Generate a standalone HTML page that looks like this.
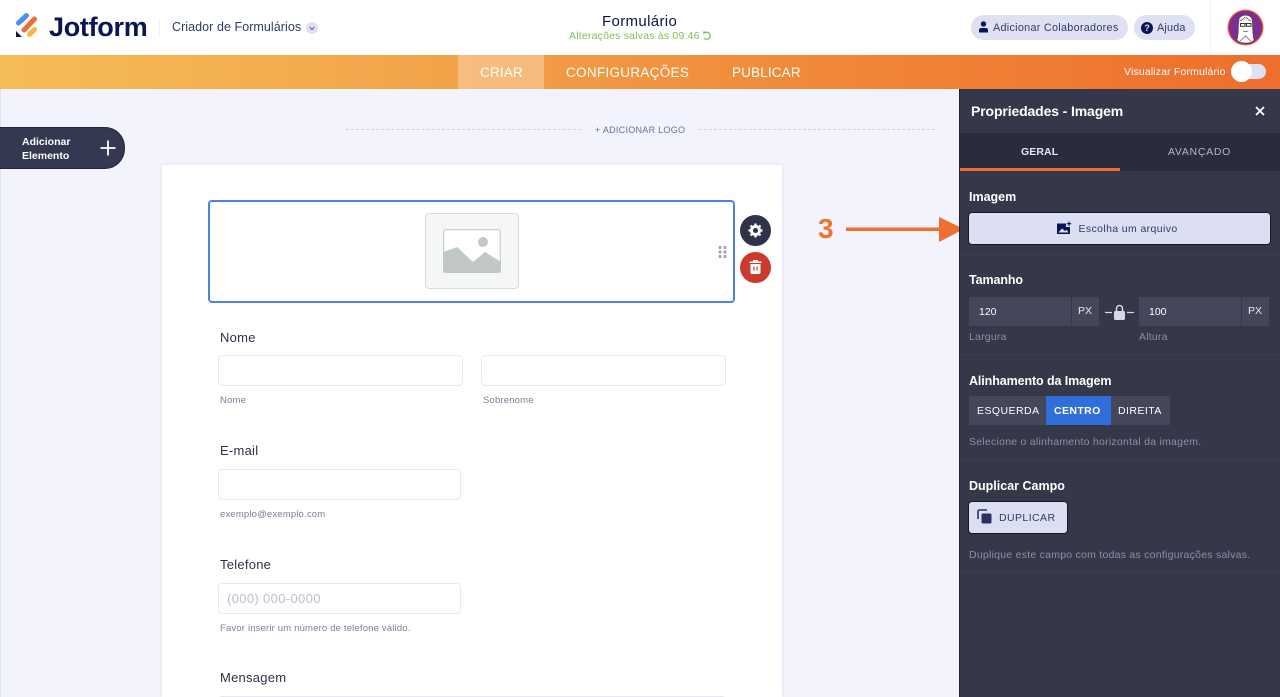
<!DOCTYPE html>
<html lang="pt"><head><meta charset="utf-8"><title>Jotform</title>
<style>
html,body{margin:0;padding:0;width:1280px;height:697px;overflow:hidden;background:#f3f3fe;font-family:"Liberation Sans",sans-serif}
#r{position:relative;width:1280px;height:697px;overflow:hidden}
.a{position:absolute}
.t{position:absolute;white-space:nowrap;line-height:1}
.f{position:absolute;background:#fff;border:1px solid #e8e9f0;border-radius:4px;box-sizing:border-box}
.lab{font-size:13px;color:#2c3345;letter-spacing:.25px}
.sub{font-size:9.5px;color:#7a7f98;letter-spacing:.17px}
.h{font-size:12.5px;font-weight:bold;color:#fff}
.g{font-size:10.5px;color:#8d8fa8;letter-spacing:.2px}
</style></head><body><div id="r">
<!-- header -->
<div class="a" style="left:0;top:0;width:1280px;height:55px;background:#fff"></div>
<svg class="a" style="left:15px;top:13px" width="24" height="25" viewBox="0 0 24 25">
<path d="M3.500 10 L11.500 2.500" stroke="#4c8df6" stroke-width="5" stroke-linecap="round"/>
<path d="M9 17 L19.500 6" stroke="#f26b36" stroke-width="5" stroke-linecap="round"/>
<path d="M14.500 21.500 L19.500 16.500" stroke="#f9b44b" stroke-width="5" stroke-linecap="round"/>
<path d="M1 18 L1 24 L7 24 Z" fill="#0a1551"/></svg>
<div class="t" style="left:49px;top:14px;font-size:27px;font-weight:bold;color:#0a1551;letter-spacing:-.3px">Jotform</div>
<div class="a" style="left:159px;top:19px;width:1px;height:17px;background:#eef0f6"></div>
<div class="t" style="left:172px;top:21px;font-size:12.500px;color:#2f3a6b;letter-spacing:.06px">Criador de Formulários</div>
<div class="a" style="left:306px;top:22px;width:12px;height:12px;border-radius:50%;background:#dfe1f2"></div>
<svg class="a" style="left:306px;top:22px" width="12" height="12"><path d="M3.500 5 L6 7.500 L8.500 5" fill="none" stroke="#5b6390" stroke-width="1"/></svg>
<div class="t" style="left:602px;top:14px;font-size:15px;color:#0a1551;letter-spacing:.35px">Formulário</div>
<div class="t" style="left:569px;top:31px;font-size:10.500px;color:#82bd54;letter-spacing:.2px">Alterações salvas às 09:46</div>
<svg class="a" style="left:702px;top:31px" width="10" height="10" viewBox="0 0 10 10"><path d="M2.500 2 A3.500 3.500 0 1 1 2 7" fill="none" stroke="#82bd54" stroke-width="1.300"/><path d="M1 .5 L4.500 .5 L1.500 3.500Z" fill="#82bd54"/></svg>
<div class="a" style="left:971px;top:15px;width:157px;height:25px;border-radius:13px;background:#dfe1f2"></div>
<svg class="a" style="left:978px;top:21px" width="11" height="12" viewBox="0 0 11 12"><circle cx="5.500" cy="3" r="2.700" fill="#0a1551"/><path d="M1 11.500 V9 Q1 7 3.500 7 H7.500 Q10 7 10 9 V11.500Z" fill="#0a1551"/></svg>
<div class="t" style="left:993px;top:22.500px;font-size:10.800px;color:#2f3a6b;letter-spacing:.29px">Adicionar Colaboradores</div>
<div class="a" style="left:1134px;top:15px;width:61px;height:25px;border-radius:13px;background:#dfe1f2"></div>
<div class="a" style="left:1141px;top:22px;width:12px;height:12px;border-radius:50%;background:#0a1551;color:#dfe1f2;font-size:9px;font-weight:bold;line-height:12px;text-align:center">?</div>
<div class="t" style="left:1157px;top:22.500px;font-size:10.800px;color:#2f3a6b;letter-spacing:.2px">Ajuda</div>
<div class="a" style="left:1210px;top:0;width:1px;height:55px;background:#f1f2f7"></div>
<svg class="a" style="left:1227px;top:9px" width="37" height="37" viewBox="0 0 37 37">
<circle cx="18.500" cy="18.500" r="18" fill="#f0602f"/><circle cx="18.500" cy="18.500" r="16.800" fill="#7d2e91"/>
<path d="M10 31 C12 24 11 14 12 10 C13 5 24 5 25 10 C26 14 25 24 27 31 C24 35 13 35 10 31Z" fill="#fff" stroke="#444" stroke-width=".6"/>
<path d="M13 14.500 H24" stroke="#333" stroke-width=".8"/>
<rect x="13.500" y="14.500" width="4.500" height="2.800" fill="none" stroke="#333" stroke-width="1"/><rect x="19.500" y="14.500" width="4.500" height="2.800" fill="none" stroke="#333" stroke-width="1"/>
<path d="M16 22 Q18.500 23.500 21 22 M13 32 L18.500 27 L24 32 M12.500 12 Q16 11 18 8 M24 12 Q21 11 19 8" fill="none" stroke="#555" stroke-width=".7"/></svg>
<!-- orange bar -->
<div class="a" style="left:0;top:55px;width:1280px;height:34px;background:linear-gradient(90deg,#f5bc57 0%,#f2a74b 30%,#f08737 65%,#ee6e2d 100%)"></div>
<div class="a" style="left:458px;top:55px;width:86px;height:34px;background:rgba(255,255,255,.3)"></div>
<div class="t" style="left:480px;top:65.500px;font-size:13.500px;color:#fff;letter-spacing:.2px">CRIAR</div>
<div class="t" style="left:566px;top:65.500px;font-size:13.500px;color:#fff;letter-spacing:.3px">CONFIGURAÇÕES</div>
<div class="t" style="left:732px;top:65.500px;font-size:13.500px;color:#fff;letter-spacing:.15px">PUBLICAR</div>
<div class="t" style="left:1124px;top:67px;font-size:10.500px;color:#fff;letter-spacing:.15px">Visualizar Formulário</div>
<div class="a" style="left:1234px;top:64px;width:32px;height:15px;border-radius:8px;background:#dfe1f2"></div>
<div class="a" style="left:1231px;top:61px;width:21px;height:21px;border-radius:50%;background:#fff"></div>
<!-- canvas -->
<div class="a" style="left:0;top:89px;width:1px;height:608px;background:#e3e4f2"></div>
<div class="a" style="left:346px;top:129px;width:235px;border-top:1px dashed #cfd1e3"></div>
<div class="a" style="left:699px;top:129px;width:236px;border-top:1px dashed #cfd1e3"></div>
<div class="t" style="left:595px;top:126px;font-size:9px;color:#6b6f95;letter-spacing:.28px">+ ADICIONAR LOGO</div>
<div class="a" style="left:0;top:127px;width:125px;height:42px;box-sizing:border-box;background:#343851;border:1px solid #24273a;border-left:0;border-radius:0 20px 20px 0"></div>
<div class="t" style="left:22px;top:135px;font-size:10.500px;font-weight:bold;color:#fff;line-height:14px">Adicionar<br>Elemento</div>
<svg class="a" style="left:100px;top:140px" width="16" height="16"><path d="M8 0.500V15.500M0.500 8H15.500" stroke="#fff" stroke-width="1.800"/></svg>
<!-- form card -->
<div class="a" style="left:162px;top:165px;width:620px;height:532px;background:#fff;box-shadow:0 0 4px rgba(80,80,140,.12)"></div>
<div class="a" style="left:208px;top:200px;width:527px;height:103px;box-sizing:border-box;border:2px solid #4f81e2;border-radius:4px"></div>
<div class="a" style="left:425px;top:213px;width:94px;height:76px;box-sizing:border-box;background:#f5f6f8;border:1px solid #d8dbdd;border-radius:4px"></div>
<svg class="a" style="left:443px;top:229px" width="58" height="44" viewBox="0 0 58 44">
<rect x=".7" y=".7" width="56.600" height="42.600" rx="2" fill="#fff" stroke="#cdd2d2" stroke-width="1.400"/>
<circle cx="40" cy="13" r="5" fill="#c1c7c7"/>
<path d="M0 23 L14 18 L30 33 L42 23 L58 33 V42 Q58 44 56 44 H2 Q0 44 0 42Z" fill="#c1c7c7"/></svg>
<svg class="a" style="left:718px;top:245px" width="9" height="14"><g fill="#a0a5bf"><circle cx="2" cy="2.500" r="1.600"/><circle cx="7" cy="2.500" r="1.600"/><circle cx="2" cy="7" r="1.600"/><circle cx="7" cy="7" r="1.600"/><circle cx="2" cy="11.500" r="1.600"/><circle cx="7" cy="11.500" r="1.600"/></g></svg>
<div class="a" style="left:740px;top:215px;width:31px;height:31px;border-radius:50%;background:#2f3349"></div>
<svg class="a" style="left:747px;top:222px" width="17" height="17" viewBox="0 0 17 17"><circle cx="8.500" cy="8.500" r="4" fill="none" stroke="#fff" stroke-width="3"/><path d="M8.500 1.500V4M8.500 13V15.500M1.500 8.500H4M13 8.500H15.500M3.500 3.500L5.300 5.300M11.700 11.700L13.500 13.500M13.500 3.500L11.700 5.300M5.300 11.700L3.500 13.500" stroke="#fff" stroke-width="2.200"/></svg>
<div class="a" style="left:740px;top:252px;width:31px;height:31px;border-radius:50%;background:#cc3a2e"></div>
<svg class="a" style="left:749px;top:259px" width="13" height="16" viewBox="0 0 13 16"><path d="M0.500 2.500H12.500V4H0.500Z M4 2.500V1H9V2.500Z M1.500 5H11.500V13.500Q11.500 15 10 15H3Q1.500 15 1.500 13.500Z" fill="#fff"/><path d="M5 7.500V11.500M8 7.500V11.500" stroke="#cc3a2e" stroke-width="1.200"/></svg>
<div class="t lab" style="left:220px;top:331px">Nome</div>
<div class="f" style="left:218px;top:355px;width:245px;height:31px"></div>
<div class="f" style="left:481px;top:355px;width:245px;height:31px"></div>
<div class="t sub" style="left:220px;top:395.500px">Nome</div>
<div class="t sub" style="left:483px;top:395.500px">Sobrenome</div>
<div class="t lab" style="left:220px;top:444px">E-mail</div>
<div class="f" style="left:218px;top:469px;width:243px;height:31px"></div>
<div class="t sub" style="left:220px;top:510px">exemplo@exemplo.com</div>
<div class="t lab" style="left:220px;top:558px">Telefone</div>
<div class="f" style="left:218px;top:583px;width:243px;height:31px"></div>
<div class="t" style="left:227px;top:592px;font-size:13px;color:#b9bdd0;letter-spacing:.35px">(000) 000-0000</div>
<div class="t sub" style="left:220px;top:624px">Favor inserir um número de telefone válido.</div>
<div class="t lab" style="left:220px;top:671px">Mensagem</div>
<div class="f" style="left:218px;top:696px;width:508px;height:31px"></div>
<!-- arrow -->
<div class="t" style="left:818px;top:215px;font-size:28px;font-weight:bold;color:#ee7430;">3</div>
<svg class="a" style="left:845px;top:216px" width="120" height="26"><path d="M1 11.500H94V1L119 13L94 26V15H1Z" fill="#ee7030"/></svg>
<!-- panel -->
<div class="a" style="left:959px;top:89px;width:321px;height:608px;background:#343849;border-left:1px solid #1f2130;box-sizing:border-box"></div>
<div class="t" style="left:971px;top:104px;font-size:14px;font-weight:bold;color:#fff;letter-spacing:-.13px">Propriedades - Imagem</div>
<svg class="a" style="left:1255px;top:106px" width="10" height="10"><path d="M1 1L9 9M9 1L1 9" stroke="#fff" stroke-width="1.800"/></svg>
<div class="a" style="left:960px;top:133px;width:320px;height:38px;background:#292c3c"></div>
<div class="a" style="left:960px;top:168px;width:160px;height:3px;background:#ee6d2c"></div>
<div class="t" style="left:1021px;top:147px;font-size:10.500px;font-weight:bold;color:#e6e6ee;letter-spacing:.1px">GERAL</div>
<div class="t" style="left:1168px;top:147px;font-size:10.500px;color:#b4b6c6;letter-spacing:.7px">AVANÇADO</div>
<div class="t h" style="left:969px;top:190.500px">Imagem</div>
<div class="a" style="left:968px;top:212px;width:303px;height:33px;box-sizing:border-box;background:#dcdff2;border:1px solid #15172a;border-radius:4px"></div>
<svg class="a" style="left:1056px;top:221px" width="16" height="14" viewBox="0 0 16 14"><path d="M1 2.500H10V6H14V13H1Z" fill="#0a1551"/><path d="M2.500 11.500L6 7.500L9 10L10.500 8.800L12.500 11.500Z" fill="#dcdff2"/><path d="M13 .5V5M10.800 2.700H15.200" stroke="#0a1551" stroke-width="1.100"/></svg>
<div class="t" style="left:1078.500px;top:224px;font-size:10.500px;color:#2f3a6b;letter-spacing:.38px">Escolha um arquivo</div>
<div class="a" style="left:960px;top:254px;width:320px;height:1px;background:#3b3f52"></div>
<div class="t h" style="left:969px;top:274px;letter-spacing:-.1px">Tamanho</div>
<div class="a" style="left:969px;top:297px;width:102px;height:29px;background:#434759"></div>
<div class="a" style="left:1072px;top:297px;width:27px;height:29px;background:#434759"></div>
<div class="t" style="left:979px;top:306.500px;font-size:10.500px;color:#fff">120</div>
<div class="t" style="left:1078px;top:306px;font-size:10.500px;color:#e8e8f0">PX</div>
<svg class="a" style="left:1105px;top:304px" width="29" height="17" viewBox="0 0 29 17"><path d="M0 8.500H7M22 8.500H29" stroke="#d7d8e2" stroke-width="1.200"/><rect x="9" y="7" width="11" height="9" rx="1.500" fill="#d7d8e2"/><path d="M11.500 8V4.500a3 3 0 0 1 6 0V8" fill="none" stroke="#d7d8e2" stroke-width="1.500"/></svg>
<div class="a" style="left:1139px;top:297px;width:102px;height:29px;background:#434759"></div>
<div class="a" style="left:1242px;top:297px;width:27px;height:29px;background:#434759"></div>
<div class="t" style="left:1149px;top:306.500px;font-size:10.500px;color:#fff">100</div>
<div class="t" style="left:1248px;top:306px;font-size:10.500px;color:#e8e8f0">PX</div>
<div class="t g" style="left:969px;top:332px">Largura</div>
<div class="t g" style="left:1139px;top:332px">Altura</div>
<div class="a" style="left:960px;top:354px;width:320px;height:1px;background:#3b3f52"></div>
<div class="t h" style="left:969px;top:374.500px;letter-spacing:-.1px">Alinhamento da Imagem</div>
<div class="a" style="left:969px;top:396px;width:201px;height:29px;background:#434759"></div>
<div class="a" style="left:1046px;top:396px;width:65px;height:29px;background:#306fd9"></div>
<div class="t" style="left:977px;top:405.500px;font-size:10.500px;color:#fff;letter-spacing:.45px">ESQUERDA</div>
<div class="t" style="left:1054px;top:405.500px;font-size:10.500px;font-weight:bold;color:#fff;letter-spacing:.4px">CENTRO</div>
<div class="t" style="left:1118px;top:405.500px;font-size:10.500px;color:#fff;letter-spacing:.45px">DIREITA</div>
<div class="t g" style="left:969px;top:437px;letter-spacing:.25px">Selecione o alinhamento horizontal da imagem.</div>
<div class="a" style="left:960px;top:459px;width:320px;height:1px;background:#3b3f52"></div>
<div class="t h" style="left:969px;top:480px">Duplicar Campo</div>
<div class="a" style="left:968px;top:501px;width:100px;height:33px;box-sizing:border-box;background:#dcdff2;border:1px solid #15172a;border-radius:4px"></div>
<svg class="a" style="left:977px;top:509px" width="15" height="15" viewBox="0 0 15 15"><path d="M1 10V2.500Q1 1 2.500 1H10" fill="none" stroke="#2a3160" stroke-width="1.600"/><rect x="4.500" y="4.500" width="10" height="10" rx="1.500" fill="#2a3160"/></svg>
<div class="t" style="left:999px;top:513px;font-size:10.500px;color:#2f3a6b;letter-spacing:.42px">DUPLICAR</div>
<div class="t g" style="left:969px;top:550px;letter-spacing:.25px">Duplique este campo com todas as configurações salvas.</div>
<div class="a" style="left:960px;top:571px;width:320px;height:1px;background:#3b3f52"></div>
</div></body></html>
